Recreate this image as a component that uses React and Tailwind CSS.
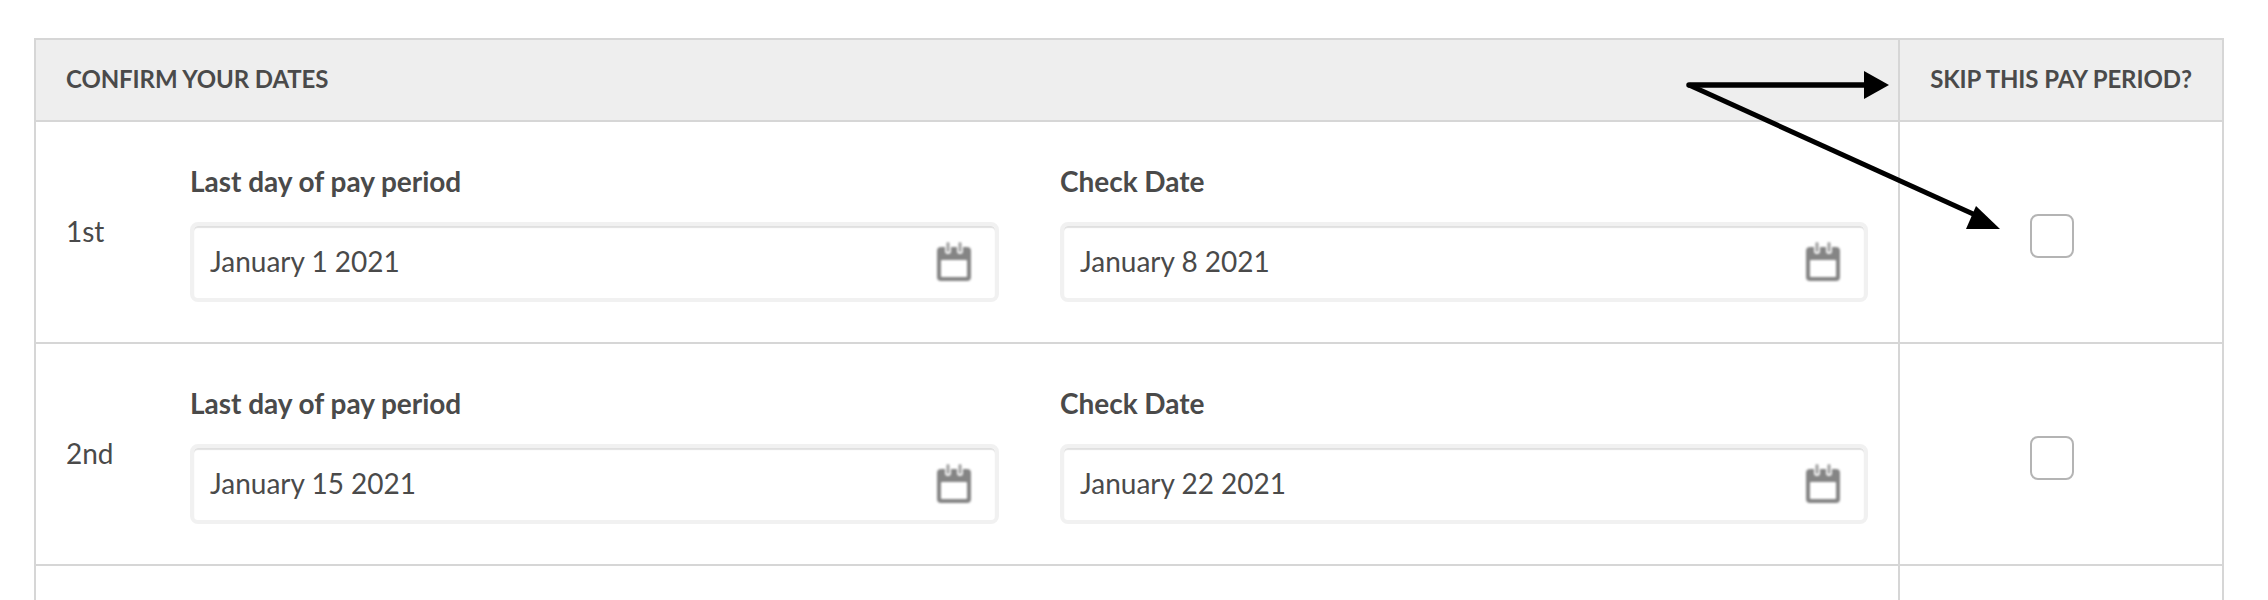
const rows = [
  { label: '1st', lastDay: 'January 1 2021', check: 'January 8 2021' },
  { label: '2nd', lastDay: 'January 15 2021', check: 'January 22 2021' },
];

const CalendarIcon = () => (
  <svg viewBox="0 0 36 40" className="h-10 w-9 shrink-0 blur-[0.8px]">
    <path
      d="M5 5h4v4a3 3 0 0 0 6 0V5h6v4a3 3 0 0 0 6 0V5h4a4 4 0 0 1 4 4v26a4 4 0 0 1-4 4H5a4 4 0 0 1-4-4V9a4 4 0 0 1 4-4z"
      fill="#858585"
    />
    <rect x="5" y="18" width="26" height="17" rx="1" fill="#fff" />
    <rect x="10.5" y="0" width="3" height="10" rx="1.5" fill="#a0a0a0" />
    <rect x="22.5" y="0" width="3" height="10" rx="1.5" fill="#a0a0a0" />
  </svg>
);

const DateField = ({ label, value, width }) => (
  <div className={width}>
    <div className="h-[40px] pb-[2px] text-[28px] leading-[38px] font-bold tracking-[-0.03px]">{label}</div>
    <div className="mt-[20px] flex h-[80px] items-center justify-between rounded-[8px] border-4 border-[#f1f1f1] pl-[16px] pr-[23px] shadow-[inset_0_2px_1px_rgba(0,0,0,0.12)]">
      <span className="pb-[2px] text-[28px] leading-none">{value}</span>
      <CalendarIcon />
    </div>
  </div>
);

const Row = ({ label, lastDay, check }) => (
  <div className="flex h-[222px] border-b-2 border-[#d6d6d6]">
    <div className="flex w-[1864px] items-center border-r-2 border-[#d6d6d6]">
      <div className="w-[154px] pb-[2px] pl-[30px] text-[28px]">{label}</div>
      <div className="flex gap-[61px]">
        <DateField label="Last day of pay period" value={lastDay} width="w-[809px]" />
        <DateField label="Check Date" value={check} width="w-[808px]" />
      </div>
    </div>
    <div className="flex flex-1 items-center justify-center pr-[18px] pt-[8px]">
      <div className="h-[44px] w-[44px] rounded-[8px] border-2 border-[#b4b4b4] bg-white" />
    </div>
  </div>
);

const Arrows = () => (
  <svg className="absolute left-0 top-0 h-[600px] w-[2268px]" viewBox="0 0 2268 600">
    <path d="M1689 85H1866" stroke="#000" strokeWidth="5.5" strokeLinecap="round" fill="none" />
    <path d="M1864 71L1889 85L1864 99z" fill="#000" />
    <path d="M1689 85L1982 218" stroke="#000" strokeWidth="5" fill="none" />
    <path d="M1976 206L2000 229L1966 229z" fill="#000" />
  </svg>
);

export default function App() {
  return (
    <div className="relative h-[600px] w-[2268px] overflow-hidden bg-white pl-[34px] pr-[44px] pt-[38px] font-['Lato','Carlito','Open_Sans',sans-serif] text-[#4a4a4a]">
      <div className="h-[600px] border-x-2 border-t-2 border-[#d6d6d6]">
        <div className="flex h-[82px] border-b-2 border-[#d6d6d6] bg-[#eee] pb-[2px] text-[24px] font-bold leading-none tracking-[-0.1px]">
          <div className="-mb-[2px] flex w-[1864px] items-center border-r-2 border-[#d6d6d6] pb-[2px] pl-[30px]">CONFIRM YOUR DATES</div>
          <div className="flex flex-1 items-center justify-center">SKIP THIS PAY PERIOD?</div>
        </div>
        {rows.map((row) => (
          <Row key={row.label} {...row} />
        ))}
        <div className="flex h-[40px]">
          <div className="w-[1864px] border-r-2 border-[#d6d6d6]" />
        </div>
      </div>
      <Arrows />
    </div>
  );
}
